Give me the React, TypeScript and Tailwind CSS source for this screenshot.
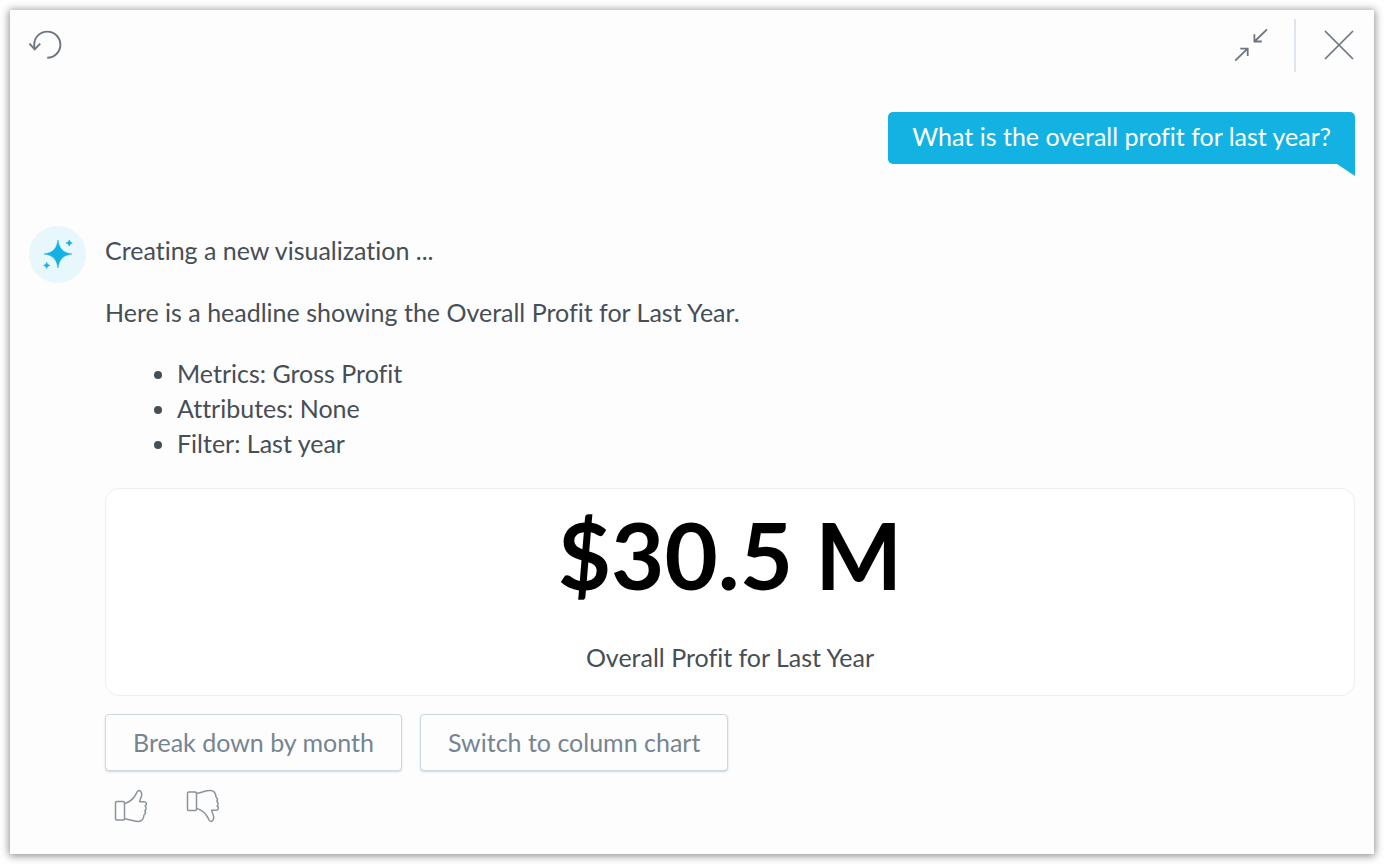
const details = ['Metrics: Gross Profit', 'Attributes: None', 'Filter: Last year'];

const suggestions = ['Break down by month', 'Switch to column chart'];

const ResetIcon = () => (
  <svg width="34" height="30" viewBox="0 0 34 30" fill="none" stroke="currentColor" strokeWidth="1.9">
    <path d="M18.2 27.8A13.1 13.1 0 1 0 5.2 14.7C5.2 16.3 5.4 17.8 5.7 19.2" />
    <path d="M.5 13.6L5.7 19.3L11.2 13.6" />
  </svg>
);

const CollapseIcon = () => (
  <svg width="34" height="34" viewBox="0 0 34 34" fill="none" stroke="currentColor" strokeWidth="1.8">
    <path d="M33 1.3L20.5 13.5M20.4 6.3V13.5H27.8" />
    <path d="M1.2 32.7L13.6 20.6M6.3 20.6H13.7V28" />
  </svg>
);

const CloseIcon = () => (
  <svg width="30" height="30" viewBox="0 0 30 30" fill="none" stroke="currentColor" strokeWidth="1.7">
    <path d="M1 1L29 29M29 1L1 29" />
  </svg>
);

const SparkleIcon = () => (
  <svg width="30" height="30" viewBox="0 0 30 30" fill="currentColor">
    <path d="M15 0C16.4 8.4 19.4 12.6 29 14C19.4 15.4 16.4 19.6 15 28C13.6 19.6 10.6 15.4 1 14C10.6 12.6 13.6 8.4 15 0Z" stroke="currentColor" strokeWidth=".5" />
    <path d="M26.2 .2C26.8 2 27.4 2.4 29.2 3C27.4 3.6 26.8 4.2 26.2 6C25.6 4.2 25 3.6 23.2 3C25 2.4 25.6 2 26.2 .2Z" stroke="currentColor" strokeWidth=".8" />
    <path d="M3.7 22.4C4.3 24.2 4.9 24.8 6.7 25.4C4.9 26 4.3 26.6 3.7 28.4C3.1 26.6 2.5 26 .7 25.4C2.5 24.8 3.1 24.2 3.7 22.4Z" stroke="currentColor" strokeWidth=".8" />
  </svg>
);

const ThumbIcon = ({ className = '' }: { className?: string }) => (
  <svg width="34" height="34" viewBox="0 0 34 34" fill="none" stroke="currentColor" strokeWidth="1.5" strokeLinejoin="round" className={className}>
    <rect x="1.5" y="12.5" width="9" height="18.5" rx="1.2" />
    <path d="M10.5 14.6C15.5 13.2 20 9.3 22.4 4.4C23 2.8 23.4 1.6 25 1.6C27.4 1.8 28.1 4.6 27.5 7C27 9.3 25.9 10.8 25.7 12.7H30.3C33 12.9 32.9 16 31.1 17C32.7 18.2 32.3 20.6 30.9 21.5C31.8 23 31.3 25 30 26C29.7 29.2 28 32.4 24.4 32.4C18.5 32.5 15.5 30 10.5 29.7" />
  </svg>
);

const Header = () => {
  return (
    <header className="flex items-start justify-between text-[#6d7680]">
      <button type="button" aria-label="Reset conversation" className="mt-[11px] cursor-pointer">
        <ResetIcon />
      </button>
      <div className="flex h-[53px] items-center pr-px">
        <button type="button" aria-label="Collapse" className="cursor-pointer pb-0.5">
          <CollapseIcon />
        </button>
        <div className="ml-[26px] mr-7 h-full w-0.5 bg-[#dde4eb]" />
        <button type="button" aria-label="Close" className="cursor-pointer pb-0.5">
          <CloseIcon />
        </button>
      </div>
    </header>
  );
};

const Question = () => {
  return (
    <div className="mt-10 flex flex-col items-end">
      <p className="rounded-t-[5px] rounded-bl-[5px] bg-[#14b2e2] px-6 pb-[10px] pt-[7px] text-white">
        What is the overall profit for last year?
      </p>
      <svg width="18" height="12" viewBox="0 0 18 12" className="text-[#14b2e2]" aria-hidden="true">
        <path d="M0 0H18V12Z" fill="currentColor" />
      </svg>
    </div>
  );
};

const Answer = () => {
  return (
    <div className="mt-[50px] flex items-start gap-[19px]">
      <div className="flex size-[57px] shrink-0 items-center justify-center rounded-full bg-[#e8f7fc] text-[#14b2e2]">
        <SparkleIcon />
      </div>
      <div className="min-w-0 flex-1 pt-[7px]">
        <p>Creating a new visualization ...</p>
        <p className="mt-[27px]">Here is a headline showing the Overall Profit for Last Year.</p>
        <ul className="mt-[26px] list-disc pl-[72px]">
          {details.map((item) => (
            <li key={item}>{item}</li>
          ))}
        </ul>

        <div className="mt-[27px] flex flex-col items-center rounded-[14px] border border-[#eceef0] bg-white pb-5 pt-[10px]">
          <p className="text-[92px] font-bold leading-[112px] text-black">$30.5 M</p>
          <p className="mt-[29px]">Overall Profit for Last Year</p>
        </div>

        <div className="mt-[18px] flex flex-wrap gap-[18px]">
          {suggestions.map((label) => (
            <button
              key={label}
              type="button"
              className="cursor-pointer rounded-[4px] border border-[#ccd8e2] bg-[#fdfdfd] px-[27px] py-[10px] text-[#778491] shadow-[0_1px_2px_rgba(20,56,93,0.2)]"
            >
              {label}
            </button>
          ))}
        </div>

        <div className="mt-[18px] flex gap-[38px] pl-[9px] text-[#8b939c]">
          <button type="button" aria-label="Good answer" className="cursor-pointer">
            <ThumbIcon />
          </button>
          <button type="button" aria-label="Bad answer" className="cursor-pointer">
            <ThumbIcon className="-scale-y-100" />
          </button>
        </div>
      </div>
    </div>
  );
};

const App = () => {
  return (
    <div className="flex min-h-screen flex-col bg-white p-[10px] font-['Lato','Open_Sans',sans-serif] text-[25px] leading-[35px] text-[#464e56] [font-variant-ligatures:none]">
      <main className="flex-1 bg-[#fdfdfd] px-[19px] pb-[31px] pt-[9px] shadow-[0_1px_8px_1px_rgba(0,0,0,0.45)]">
        <Header />
        <Question />
        <Answer />
      </main>
    </div>
  );
};

export default App;
